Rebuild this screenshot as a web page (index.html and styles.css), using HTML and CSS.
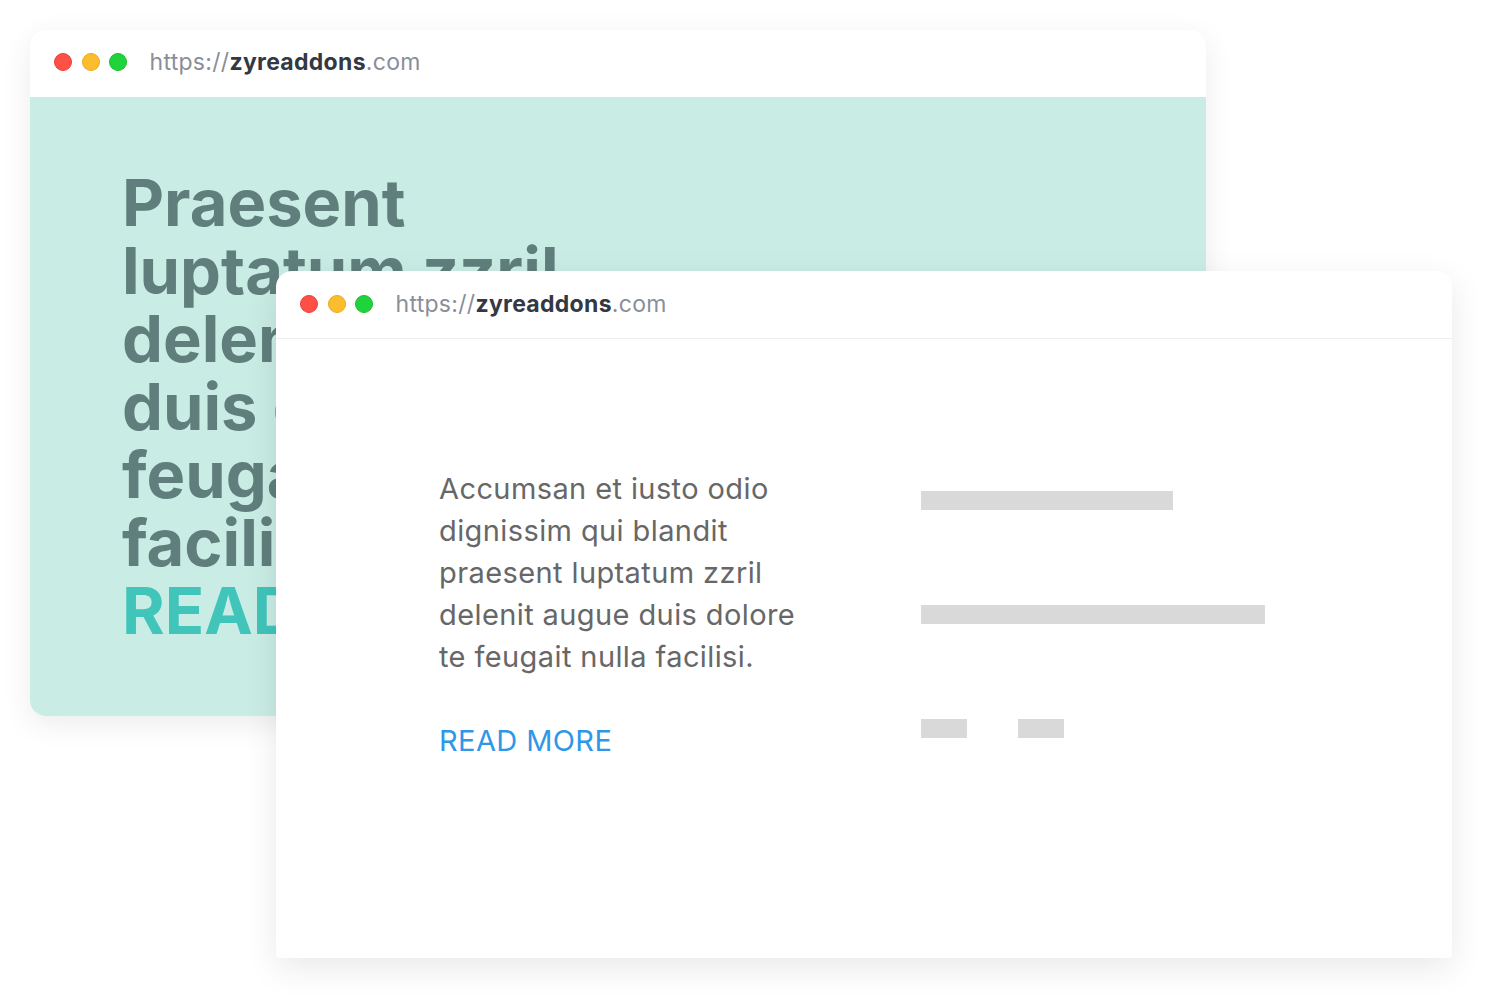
FILE: index.html
```html
<!DOCTYPE html>
<html lang="en">
<head>
  <meta charset="UTF-8">
  <meta name="viewport" content="width=device-width, initial-scale=1.0">
  <title>Zyre Addons Preview</title>
  <link rel="stylesheet" href="styles.css">
</head>
<body>

  <div class="stage">

    <!-- Back window: zoomed-in view -->
    <div class="window window-back">
      <div class="bar">
        <span class="dot red"></span>
        <span class="dot yellow"></span>
        <span class="dot green"></span>
        <span class="url">https://<b>zyreaddons</b>.com</span>
      </div>
      <div class="back-body">
        <p class="big-text">Praesent luptatum zzril delenit augue duis dolore te feugait nulla facilisi.</p>
        <a class="big-link" href="#">READ MORE</a>
      </div>
    </div>

    <!-- Front window: normal view -->
    <div class="window window-front">
      <div class="bar bar-line">
        <span class="dot red"></span>
        <span class="dot yellow"></span>
        <span class="dot green"></span>
        <span class="url">https://<b>zyreaddons</b>.com</span>
      </div>
      <div class="front-body">
        <div class="copy">
          <p>Accumsan et iusto odio dignissim qui blandit praesent luptatum zzril delenit augue duis dolore te feugait nulla facilisi.</p>
          <a class="link" href="#">READ MORE</a>
        </div>
        <div class="skeleton">
          <div class="line line-1"></div>
          <div class="line line-2"></div>
          <div class="line-row">
            <div class="line line-small"></div>
            <div class="line line-small"></div>
          </div>
        </div>
      </div>
    </div>

  </div>

</body>
</html>
```

FILE: styles.css
```css
/* Reset styling */
* {
  margin: 0;
  padding: 0;
  box-sizing: border-box;
}

body {
  font-family: Inter, "Noto Sans", Arial, sans-serif;
  background: #fff;
  width: 1496px;
  height: 1003px;
  overflow: hidden;
}

.stage {
  position: relative;
  width: 1496px;
  height: 1003px;
}

/* Windows sit on a free canvas, overlapping */
.window {
  position: absolute;
  width: 1176px;
  background-color: #fff;
  overflow: hidden;
}

.window-back {
  left: 30px;
  top: 30px;
  height: 686px;
  border-radius: 16px;
  box-shadow: 0 8px 30px rgba(0, 0, 0, 0.08);
  display: flex;
  flex-direction: column;
}

.window-front {
  left: 276px;
  top: 271px;
  height: 687px;
  border-radius: 16px 16px 4px 4px;
  box-shadow: 0 10px 34px rgba(0, 0, 0, 0.09);
}

/* Browser bar */
.bar {
  height: 67px;
  display: flex;
  align-items: center;
  padding: 0 0 3px 24px;
  gap: 9.5px;
  flex-shrink: 0;
}

.bar-line {
  height: 68px;
  padding-bottom: 2px;
  border-bottom: 1px solid #eeeeee;
}

.dot {
  width: 18px;
  height: 18px;
  border-radius: 50%;
  display: inline-block;
}

.red {
  background-color: #fe5047;
  border: 1px solid #ea3f37;
}

.yellow {
  background-color: #fbbd2e;
  border: 1px solid #eaaa1c;
}

.green {
  background-color: #20d23b;
  border: 1px solid #18bf2f;
}

.url {
  margin-left: 13px;
  font-size: 23px;
  color: #8a8e99;
  letter-spacing: 0.3px;
}

.url b {
  color: #333843;
  font-weight: 700;
}

/* Back window content */
.back-body {
  flex: 1;
  background-color: #c9ece4;
  padding: 72px 0 0 92px;
}

.big-text {
  width: 450px;
  font-size: 65px;
  line-height: 68px;
  font-weight: 700;
  color: #5f7e7c;
}

.big-link {
  display: block;
  font-size: 65px;
  line-height: 68px;
  font-weight: 700;
  color: #41c4ba;
  text-decoration: none;
}

/* Front window content */
.front-body {
  display: flex;
  padding: 129px 0 0 163px;
}

.copy {
  width: 380px;
}

.copy p {
  font-size: 29px;
  line-height: 42px;
  letter-spacing: 0.4px;
  color: #676767;
}

.link {
  display: block;
  margin-top: 42px;
  font-size: 29px;
  line-height: 42px;
  letter-spacing: 0.4px;
  color: #2f97e8;
  text-decoration: none;
}

.skeleton {
  margin-left: 102px;
  padding-top: 23px;
  display: flex;
  flex-direction: column;
  gap: 95px;
}

.line {
  height: 19px;
  background-color: #d9d9d9;
}

.line-1 {
  width: 252px;
}

.line-2 {
  width: 344px;
}

.line-row {
  display: flex;
  gap: 51px;
}

.line-small {
  width: 46px;
}
```
